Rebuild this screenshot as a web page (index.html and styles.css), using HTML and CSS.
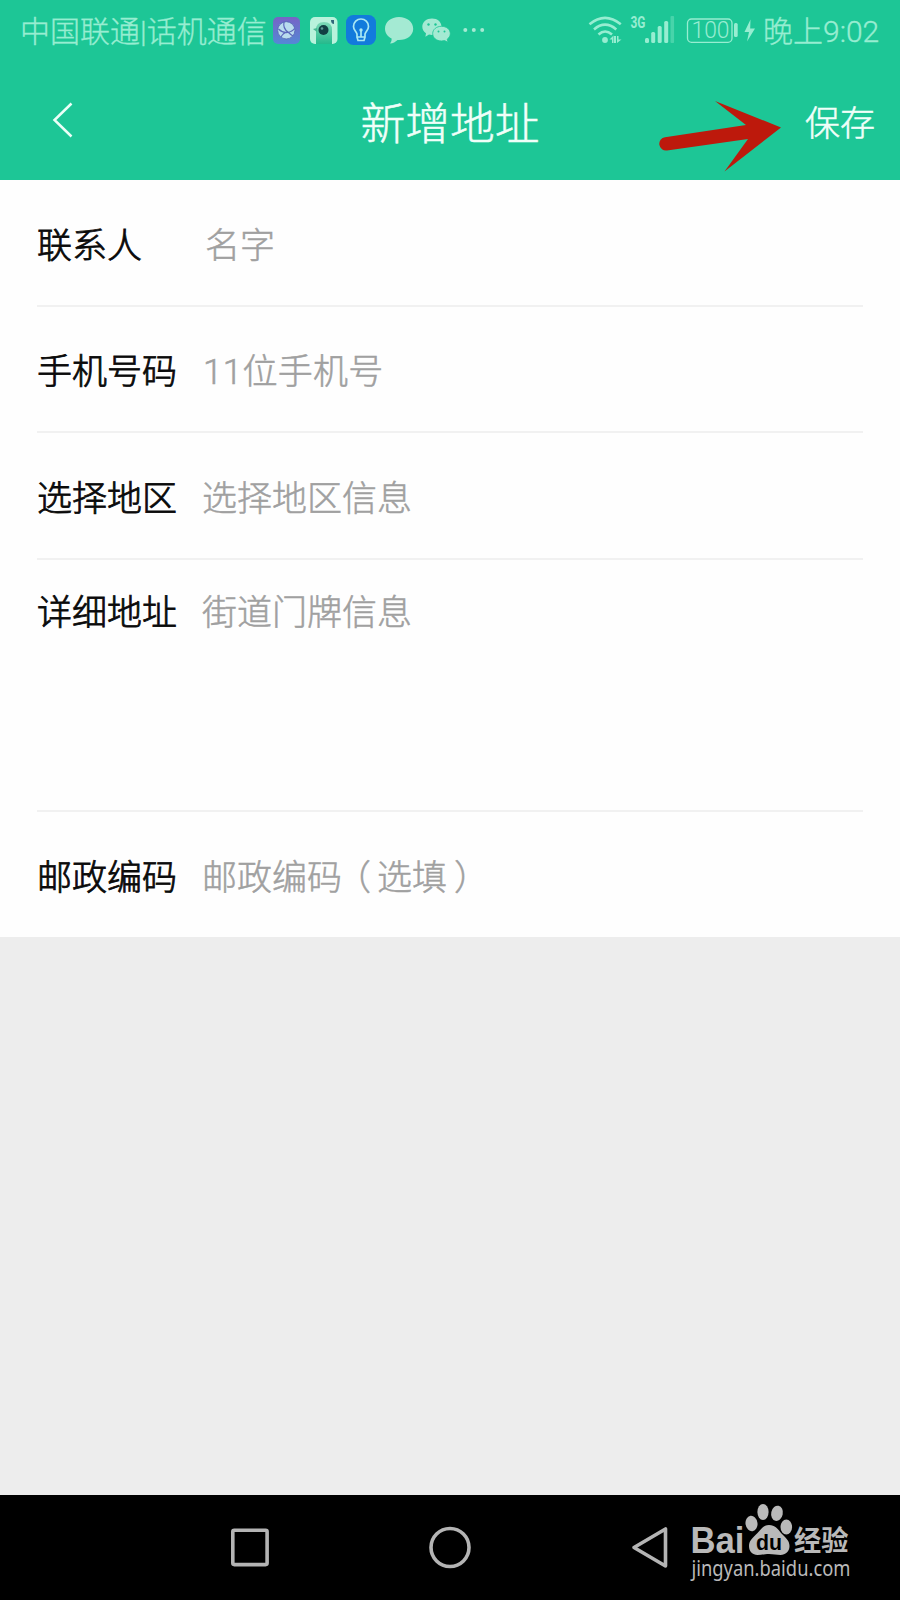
FILE: index.html
```
<!DOCTYPE html>
<html lang="zh-CN">
<head>
<meta charset="utf-8">
<title>新增地址</title>
<link rel="stylesheet" href="styles.css">
</head>
<body>
<div class="screen">
  <header class="header">
    <div class="status">
      <span class="carrier">中国联通|话机通信</span>
      <svg class="notices" width="220" height="60" viewBox="270 0 220 60">
        <defs>
          <linearGradient id="purple" x1="0" y1="0" x2="0" y2="1"><stop offset="0" stop-color="#7763c6"/><stop offset="1" stop-color="#5488d5"/></linearGradient>
          <linearGradient id="mint" x1="0" y1="0" x2="0" y2="1"><stop offset="0" stop-color="#7fd9b8"/><stop offset="1" stop-color="#25b98c"/></linearGradient>
        </defs>
        <rect x="273" y="17" width="27" height="27" rx="5" fill="url(#purple)"/>
        <circle cx="286.3" cy="30.3" r="8.6" fill="#b9dcee" stroke="#4b62ae" stroke-width=".7"/>
        <path d="M284 22c-1 5 1 8 4 10q3 3 5 4M278.500 29q4 4 9 3.500q5-1 7-4M287 32q-4 1-6 5" fill="none" stroke="#5b68bb" stroke-width="1.200"/>
        <rect x="310" y="17" width="27.500" height="27" rx="5" fill="#b9f2dc"/>
        <path d="M316 44V30q0-8 8-8t8 8v14z" fill="url(#mint)"/>
        <path d="M313 29l4-1v4z" fill="#47b892"/>
        <circle cx="323.500" cy="30" r="5" fill="#123f43"/>
        <circle cx="322" cy="28.500" r="1.300" fill="#5f9a96"/>
        <path d="M331 20h3v4q-3 0-3-4z" fill="#31677b"/>
        <rect x="346" y="15" width="30" height="30" rx="7.500" fill="#127bdc"/>
        <path d="M357 37v-3c-1-3-3.500-4-3.500-7.500a7.500 7.500 0 0 1 15 0c0 3.500-2.500 4.500-3.500 7.500v3zM357 37l1 3.500h6l1-3.500M361 37v-7" fill="none" stroke="#a9e8f3" stroke-width="1.700"/>
        <circle cx="361" cy="30" r="1.700" fill="#a9e8f3"/>
        <path d="M399 17c8 0 14.200 5 14.200 11.700S407 40 399 40l-1.500 0c-2 2-4.500 3.300-7.500 3.500 1.300-1.500 1.700-3 1.600-5-4-2-6.600-5.400-6.600-9.800C385 22 391 17 399 17z" fill="#a4ead3"/>
        <path d="M432 18.500c5.500 0 9.500 3.500 9.500 8.300S437.500 35 432 35l-3-.4-3.600 2.200.6-3.500c-2.200-1.500-3.700-3.700-3.700-6.500 0-4.800 4.200-8.300 9.700-8.300z" fill="#a4ead3"/>
        <path d="M441.500 26.300c5 0 8.800 3.200 8.800 7.300 0 2.400-1.300 4.300-3.100 5.600l.8 3.100-3.400-1.700-3.100.4c-5 0-8.800-3.200-8.800-7.400s3.800-7.300 8.800-7.300z" fill="#a4ead3" stroke="#1dc696" stroke-width=".8"/>
        <g fill="#1dc696"><circle cx="428.500" cy="24.500" r="1.200"/><circle cx="435.500" cy="24.500" r="1.200"/><circle cx="438.500" cy="31.500" r="1"/><circle cx="444.500" cy="31.500" r="1"/></g>
        <g fill="#a4ead3"><circle cx="465.300" cy="30" r="2"/><circle cx="473.800" cy="30" r="2"/><circle cx="482.200" cy="30" r="2"/></g>
      </svg>
      <svg class="signals" width="180" height="60" viewBox="580 0 180 60">
        <g fill="none" stroke="#97edd1" stroke-width="2.600">
          <path d="M589.500 24.200Q605 11.500 620.800 24.200M594 29.400Q605 20 616.300 29.400M598.500 34.500Q605 28.500 612 34.500"/>
        </g>
        <circle cx="605" cy="40" r="2.900" fill="#97edd1"/>
        <path d="M609.500 39.500l4-4v7.500h-1.500v-3.500zM614 36h2v7h-2zM617 43v-7h1.500v3.500h3z" fill="#97edd1"/>
        <text class="network" x="630.500" y="28" textLength="15" lengthAdjust="spacingAndGlyphs">3G</text>
        <g fill="#97edd1"><rect x="645" y="38" width="4" height="5" rx="1.500"/><rect x="651.200" y="32" width="4" height="11" rx="1.500"/><rect x="657.700" y="26" width="4" height="17" rx="1.500"/><rect x="664.200" y="21" width="4" height="22" rx="1.500"/><rect x="670.500" y="16" width="3.600" height="27" rx="1" opacity=".35"/></g>
        <rect x="687.500" y="19" width="44.500" height="23.300" rx="4" fill="none" stroke="#97edd1" stroke-width="1.300"/>
        <text class="charge" x="691.500" y="38.300" textLength="38" lengthAdjust="spacingAndGlyphs">100</text>
        <rect x="734" y="23" width="3.700" height="14" rx="1.500" fill="#97edd1"/>
        <path d="M750.500 19.500L744.500 32h4.500l-2 9.500L755 28.500h-4.800z" fill="#97edd1"/>
      </svg>
      <span class="time">晚上9:02</span>
    </div>
    <div class="bar">
      <svg class="back" width="24" height="40" viewBox="0 0 24 40"><path d="M20.500 3.500L3.500 20l17 16.500" fill="none" stroke="#ecfff8" stroke-width="2.500"/></svg>
      <h1 class="title">新增地址</h1>
      <span class="save">保存</span>
      <svg class="arrow" width="124" height="74" viewBox="658 98 124 74"><path d="M665 137.200L746 125 715 101 781 127.500 724.500 171.500 748 139 667 150.500A6.700 6.700 0 0 1 665 137.200z" fill="#bd190c"/></svg>
    </div>
  </header>
  <main class="form">
    <div class="row"><span class="label">联系人</span><span class="hint hint-name">名字</span></div>
    <div class="row"><span class="label">手机号码</span><span class="hint hint-phone">11位手机号</span></div>
    <div class="row"><span class="label">选择地区</span><span class="hint">选择地区信息</span></div>
    <div class="row row-tall"><span class="label">详细地址</span><span class="hint">街道门牌信息</span></div>
    <div class="row row-last"><span class="label">邮政编码</span><span class="hint">邮政编码<span class="paren-open">（</span>选填<span class="paren-close">）</span></span></div>
  </main>
  <footer class="nav">
    <svg width="900" height="105" viewBox="0 1495 900 105">
      <g fill="none" stroke="#b4b4b4" stroke-width="3.600" stroke-linejoin="round">
        <rect x="232.800" y="1530.300" width="34.300" height="34.300" rx="1.500"/>
        <circle cx="450" cy="1547.500" r="19"/>
        <path d="M665.500 1529v37L634 1547.500z"/>
      </g>
      <g fill="#b9b9b9">
        <text class="brand" x="690.500" y="1553.300" textLength="54" lengthAdjust="spacingAndGlyphs">Bai</text>
        <ellipse cx="751.500" cy="1523.500" rx="6" ry="7.700" transform="rotate(-8 751.500 1523.500)"/>
        <ellipse cx="763" cy="1512" rx="5.600" ry="8"/>
        <ellipse cx="777" cy="1513.300" rx="5.800" ry="7.700" transform="rotate(12 777 1513.300)"/>
        <ellipse cx="786.300" cy="1527" rx="5.800" ry="7.500"/>
        <path d="M769 1525c6 0 9 4 12 8 4 4.500 8.500 7 8.500 13 0 5.500-4 9-9 9-4 0-7-1-11.500-1s-7.500 1-11.500 1c-5 0-8.500-3.500-8.500-9 0-6 4.500-8.500 8.500-13 3.500-4 6.500-8 11.500-8z"/>
        <text class="brand-cn" x="794" y="1550.500" textLength="54.500" lengthAdjust="spacingAndGlyphs">经验</text>
        <text class="site" x="691.500" y="1575.500" textLength="159" lengthAdjust="spacingAndGlyphs">jingyan.baidu.com</text>
      </g>
      <text class="du" x="756" y="1549.500" textLength="26" lengthAdjust="spacingAndGlyphs">du</text>
    </svg>
  </footer>
</div>
</body>
</html>
```
FILE: styles.css
```
* { box-sizing: border-box; }
body {
  margin: 0;
  font-family: Roboto, "Noto Sans CJK SC", sans-serif;
}
svg { display: block; flex: none; }
.screen {
  width: 900px;
  height: 1600px;
  display: flex;
  flex-direction: column;
  background: #ededed;
  overflow: hidden;
}
.header { height: 180px; background: #1dc696; flex: none; }
.status {
  height: 60px;
  display: flex;
  align-items: center;
  color: #97edd1;
  font-size: 30px;
  font-weight: 300;
  line-height: 60px;
  white-space: nowrap;
  -webkit-text-stroke: .35px currentColor;
}
.status svg, .nav svg { -webkit-text-stroke: 0; }
.carrier { width: 250px; padding: 4px 0 0 20px; margin-right: 20px; }
.signals { margin-left: 90px; }
.time { margin-left: 3px; padding-top: 4px; }
.network { font: 700 16px Roboto, sans-serif; fill: #97edd1; }
.charge { font: 300 24px Roboto, sans-serif; fill: #97edd1; }
.bar {
  position: relative;
  height: 120px;
  display: grid;
  grid-template-columns: 200px 1fr 200px;
  align-items: center;
  color: #f0fff9;
  -webkit-text-stroke: .5px currentColor;
}
.back { margin-left: 51px; }
.title {
  margin: 0;
  padding-top: 10px;
  text-align: center;
  font-size: 44.8px;
  font-weight: 300;
  line-height: 66px;
}
.save {
  padding-right: 25px;
  text-align: right;
  font-size: 35px;
  font-weight: 300;
}
.arrow { position: absolute; left: 658px; top: 38px; }
.form { background: #fefefe; padding: 0 37px; height: 757px; flex: none; }
.row {
  height: 126.5px;
  display: flex;
  align-items: center;
  padding-top: 9px;
  border-bottom: 2px solid #f1f1f1;
  font-size: 35px;
  font-weight: 300;
  line-height: 52px;
  white-space: nowrap;
}
.row-tall { height: 252px; align-items: flex-start; padding-top: 28px; }
.row-last { border-bottom: 0; padding-top: 8px; }
.label { width: 165px; color: #0a0a0a; -webkit-text-stroke: .8px currentColor; }
.hint { color: #a0a0a0; -webkit-text-stroke: .5px currentColor; }
.hint-name { padding-left: 3px; }
.hint-phone { padding-left: 1px; letter-spacing: .3px; }
.paren-open { margin: 0 6px 0 -6px; }
.paren-close { margin-left: 7px; }
.nav { margin-top: auto; height: 105px; background: #000; flex: none; }
.brand { font: 700 36px "Liberation Sans", Arial, sans-serif; }
.brand-cn { font: 700 28px "Noto Sans CJK SC", sans-serif; }
.site { font: 400 22px "Noto Sans", sans-serif; }
.du { font: 700 22px "Liberation Sans", Arial, sans-serif; fill: #000; }
```
